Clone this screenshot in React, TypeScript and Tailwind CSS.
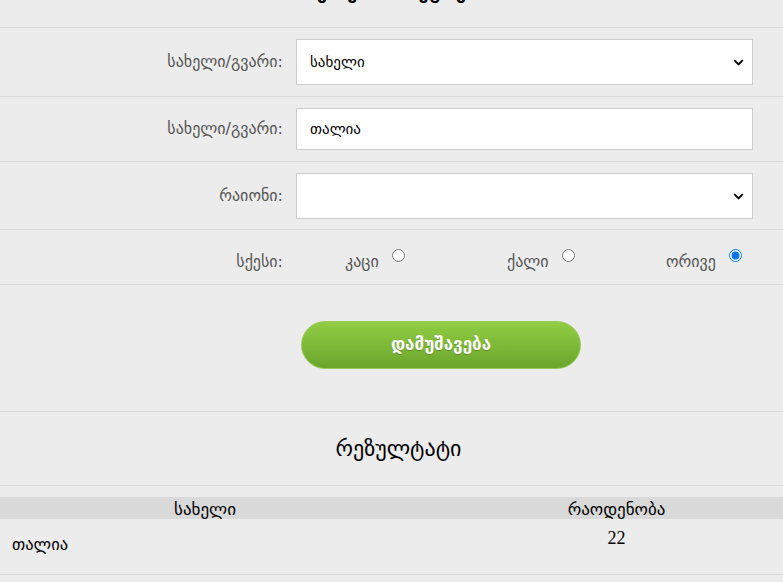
import { ChevronDown } from "lucide-react";

const ka = { fontFamily: '"DejaVu Sans", "Noto Sans", sans-serif' };

function Row({ label, h, children }: { label: string; h: string; children: React.ReactNode }) {
  return (
    <div className={`flex items-center border-b border-[#d8d8d8] ${h}`}>
      <div className="w-[283px] text-right text-[16px] text-[#555]">{label}</div>
      <div className="ml-[13px] w-[457px]">{children}</div>
    </div>
  );
}

function Select({ value }: { value: string }) {
  return (
    <div className="relative flex h-[46px] items-center border border-[#cccccc] bg-white pl-[13px] text-[15px] text-black">
      {value}
      <ChevronDown className="absolute right-[6px] top-[15px] text-black" size={15} strokeWidth={3.2} />
    </div>
  );
}

function Radio({ label, checked }: { label: string; checked?: boolean }) {
  return (
    <label className="flex items-start text-[16px] text-[#555]">
      <span className="pt-[4px]">{label}</span>
      <input type="radio" name="sex" defaultChecked={checked} className="ml-[13px] mt-[3px] h-[13px] w-[13px] accent-[#0075ff]" />
    </label>
  );
}

export default function App() {
  return (
    <div className="h-[582px] w-[783px] overflow-hidden bg-[#ececec]" style={ka}>
      <div className="h-[28px] overflow-hidden border-b border-[#d8d8d8]">
        <p className="mt-[-20px] text-center text-[18px] font-bold leading-[26px] text-black">მოძებნე პარამეტრებით</p>
      </div>

      <Row label="სახელი/გვარი:" h="h-[69px]">
        <Select value="სახელი" />
      </Row>

      <Row label="სახელი/გვარი:" h="h-[65px]">
        <div className="flex h-[42px] items-center border border-[#cccccc] bg-white pl-[13px] text-[15px] text-black">
          თალია
        </div>
      </Row>

      <Row label="რაიონი:" h="h-[68px]">
        <Select value="" />
      </Row>

      <div className="flex h-[55px] items-start border-b border-[#d8d8d8] pt-[16px]">
        <div className="w-[283px] pt-[4px] text-right text-[16px] text-[#555]">სქესი:</div>
        <div className="ml-[62px] grid grid-cols-[162px_159px_1fr]">
          <Radio label="კაცი" />
          <Radio label="ქალი" />
          <Radio label="ორივე" checked />
        </div>
      </div>

      <div className="flex h-[127px] items-start border-b border-[#d8d8d8] pl-[301px] pt-[36px]">
        <button className="h-[48px] w-[280px] rounded-full border border-[#9acb5c] bg-gradient-to-b from-[#92cd44] to-[#6ba52b] text-[17px] font-bold text-white [text-shadow:0_1px_1px_rgba(0,0,0,0.2)]">
          დამუშავება
        </button>
      </div>

      <div className="flex h-[74px] items-center justify-center border-b border-[#d8d8d8] pl-[14px] text-[22px] text-black">
        რეზულტატი
      </div>

      <div className="mt-[11px]">
        <div className="grid h-[22px] grid-cols-[410px_40px_1fr] items-center bg-[#d9d9d9] text-[17px] text-black">
          <div className="text-center">სახელი</div>
          <div />
          <div className="text-center">რაოდენობა</div>
        </div>
        <div className="grid h-[56px] grid-cols-[410px_40px_1fr] border-b border-[#d8d8d8] text-black">
          <div className="pl-[12px] pt-[14px] text-[16.5px]">თალია</div>
          <div />
          <div className="pt-[6px] text-center text-[18px]" style={{ fontFamily: '"Liberation Serif", serif' }}>22</div>
        </div>
      </div>
    </div>
  );
}
